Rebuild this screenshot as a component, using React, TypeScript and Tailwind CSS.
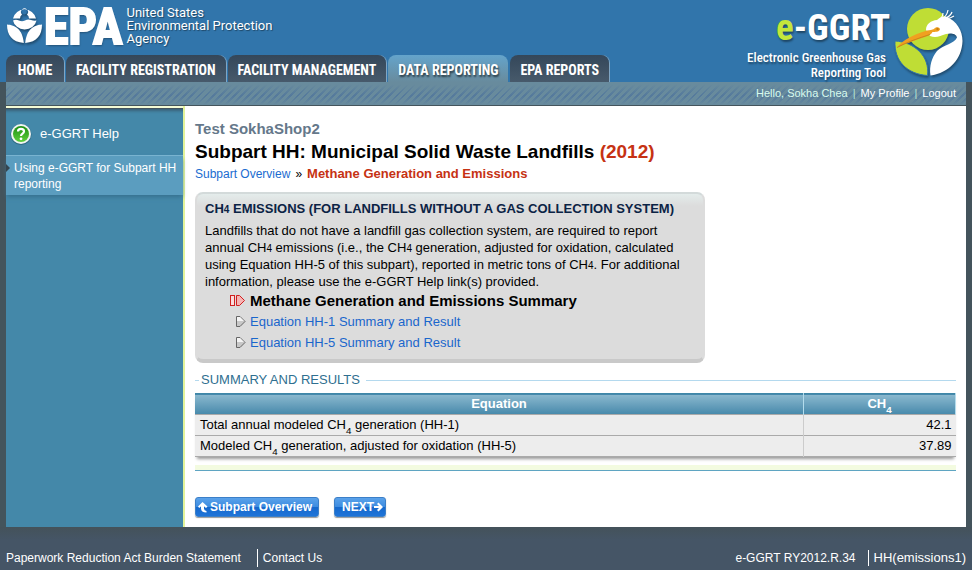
import React from "react";
import clsx from "clsx";

const tabs = [
  { label: "HOME", active: false },
  { label: "FACILITY REGISTRATION", active: false },
  { label: "FACILITY MANAGEMENT", active: false },
  { label: "DATA REPORTING", active: true },
  { label: "EPA REPORTS", active: false },
];

const EpaFlower = () => (
  <svg width="38" height="40" viewBox="0 0 38 40" className="drop-shadow-[1px_2px_1px_rgba(0,0,0,0.35)]">
    <path
      d="M7 12.500 A11.800 11.800 0 0 1 30 12.500 H23 A5 5 0 0 0 21 8.500 A3.500 3.500 0 1 0 16 8.500 A5 5 0 0 0 14 12.500 Z"
      fill="#fff"
    />
    <circle cx="18.500" cy="6" r="2.400" fill="#3175ab" />
    <path d="M7 14.500 Q10 13 13 14.500 T19 14.500 T25 14 T30.500 14.500 A12 11 0 0 1 18.500 23.500 A12 11 0 0 1 7 14.500 Z" fill="#fff" />
    <path d="M1 18.500 C9 19 16.500 23 17.800 37 C6 36 1 29 1 18.500 Z" fill="#fff" />
    <path d="M36 18.500 C28 19 20.500 23 19.200 37 C31 36 36 29 36 18.500 Z" fill="#fff" />
  </svg>
);

const HeronLogo = () => (
  <svg width="72" height="76" viewBox="0 0 72 76" className="drop-shadow-[1px_2px_1px_rgba(0,0,0,0.35)]">
    <circle cx="34" cy="25" r="21" fill="#bfdd35" />
    <path d="M1 37 C20 38 36 52 33.500 71.500 C13 70 0 57 1 37 Z" fill="#bfdd35" stroke="#3175ab" strokeWidth="1" />
    <path
      d="M32 26 C32 20 37 16.500 43 16 C46 13 49 12 52 12.500 C63 17 68.500 27 68.500 37 C68 55 55 69 36.500 71.500 C35 62 38 53 43 47 C49 41 60 40 63 33.500 C62 29 56 29 52 30 C46 32 42 34.500 36 32 Z"
      fill="#fff"
    />
    <path
      d="M48 15 Q53 12 54 6 M50 15 Q57 12 58 8 M52 15 Q57 14 60 12 M47 14 Q49 12 49 9"
      fill="none"
      stroke="#fff"
      strokeWidth="1.200"
    />
    <path d="M3 43.500 C9 36 18 31 33 26.500 C36 26.500 38 25.500 40 25 C41.500 22.500 46 23 46 25.500 C45 28 41 28 38.500 28 C37 30.500 35 31.500 31 33 C22 36 13 39 3 43.500 Z" fill="#f0a020" />
    <path d="M3 43.500 C13 38 25 34 36 30.500" fill="none" stroke="#c07c18" strokeWidth="0.800" />
    <circle cx="43.500" cy="25" r="1.200" fill="#c87a10" />
  </svg>
);

const HelpIcon = () => (
  <svg width="22" height="22" viewBox="0 0 22 22" aria-hidden="true">
    <defs>
      <linearGradient id="help" x1="0" y1="0" x2="0" y2="1">
        <stop offset="0" stopColor="#1d8f12" />
        <stop offset="1" stopColor="#5fd03c" />
      </linearGradient>
    </defs>
    <circle cx="11" cy="11.500" r="10.500" fill="#2d6a84" />
    <circle cx="11" cy="11" r="10" fill="#f2f5f2" />
    <circle cx="11" cy="11" r="8" fill="url(#help)" />
    <path d="M8 8.500 C8 5 14 5 14 8.500 C14 10.800 11 10.500 11 13" fill="none" stroke="#fff" strokeWidth="2.200" />
    <circle cx="11" cy="15.800" r="1.400" fill="#fff" />
  </svg>
);

const StepIcon = ({ current = false }: { current?: boolean }) =>
  current ? (
    <svg width="16" height="13" viewBox="0 0 16 13" aria-hidden="true">
      <rect x="0.500" y="1.500" width="4" height="10" fill="#fbdcdc" stroke="#d02020" />
      <path d="M6.500 1.500 H9.500 L14.500 6.500 L9.500 11.500 H6.500 Z" fill="#f7b4b4" stroke="#d02020" />
    </svg>
  ) : (
    <svg width="10" height="13" viewBox="0 0 10 13" aria-hidden="true">
      <path d="M0.500 1.500 H4 L9 6.500 L4 11.500 H0.500 Z" fill="#c8c8c8" stroke="#666" />
      <path d="M1 2 H4 L8 6 H1 Z" fill="#f4f4f4" />
    </svg>
  );

const Sub4 = () => <span className="text-[10px] leading-none">4</span>;

const Header = () => (
  <header>
    <div className="bg-[#3175ab] h-[82px] px-[6px] flex justify-between">
      <div className="flex flex-col justify-between">
        <div className="flex text-white pt-[6px]">
          <EpaFlower />
          <span className="font-['Roboto_Condensed'] font-bold text-[50px] leading-[42px] [-webkit-text-stroke:2px_white] [text-shadow:1px_2px_2px_rgba(0,0,0,0.3)]">
            EPA
          </span>
          <span className="ml-1 font-[Roboto] text-[13px] leading-[13px] [text-shadow:1px_1px_1px_rgba(0,0,0,0.4)]">
            United States
            <br />
            Environmental Protection
            <br />
            Agency
          </span>
        </div>
        <nav className="flex gap-[2px]">
          {tabs.map((tab) => (
            <a
              key={tab.label}
              href="#"
              className={clsx(
                "h-[27px] min-w-[58px] px-[10px] rounded-t-lg text-center font-['Roboto_Condensed'] font-bold text-[14px] leading-[31px] text-white whitespace-nowrap",
                tab.active
                  ? "bg-linear-to-b from-[#64a4cb] to-[#688b9d] [text-shadow:1px_2px_2px_rgba(0,0,0,0.6)]"
                  : "bg-linear-to-b from-[#34475a] to-[#475a6b] shadow-[1px_0_0_#7fa6c4]"
              )}
            >
              {tab.label}
            </a>
          ))}
        </nav>
      </div>
      <div className="flex text-white">
        <div className="text-right pt-[6px] pr-2 [text-shadow:1px_2px_2px_rgba(0,0,0,0.4)]">
          <div className="-mr-1 font-['Roboto_Condensed'] font-bold text-[37px] leading-[44px]">
            <span className="text-[#c3e63b]">e</span>-GGRT
          </div>
          <div className="font-['Roboto_Condensed'] font-medium text-[13px] leading-[15px]">
            Electronic Greenhouse Gas
            <br />
            Reporting Tool
          </div>
        </div>
        <div className="pt-1">
          <HeronLogo />
        </div>
      </div>
    </div>
    <div className="mx-[6px] h-6 px-[10px] flex items-center justify-end gap-[5px] text-[11px] text-white border-b border-[#44545c] bg-[#688b9d] bg-[linear-gradient(to_bottom,#688b9d_10%,transparent_60%,#688b9d_100%),repeating-linear-gradient(135deg,#54799c_0_2px,#688b9d_2px_5px)]">
      <span className="text-[#d9fbee]">Hello, Sokha Chea</span>
      <span className="text-[#b5e5d5]">|</span>
      <a href="#">My Profile</a>
      <span className="text-[#b5e5d5]">|</span>
      <a href="#">Logout</a>
    </div>
  </header>
);

const Sidebar = () => (
  <aside className="w-[179px] shrink-0 bg-[#4488a9] border-r-2 border-[#e2f39a] text-white">
    <div className="h-[3px] bg-[#f4fbd5] border-b border-[#44545c]" />
    <a href="#" className="h-[46px] pl-1 pt-[3px] flex items-center gap-2 text-[13px] shadow-[inset_0_4px_3px_-2px_#3a6078]">
      <HelpIcon />
      e-GGRT Help
    </a>
    <a
      href="#"
      className="relative block h-10 py-1 pl-2 text-[12px] leading-4 bg-[#5b9dbf] border-t border-[#79b3d0] shadow-[0_3px_4px_-1px_#36718f]"
    >
      <span className="absolute left-0 top-2 border-y-4 border-l-4 border-y-transparent border-l-[#34454f]" />
      Using e-GGRT for Subpart HH reporting
    </a>
  </aside>
);

const InfoBox = () => (
  <section className="mt-[9px] w-[510px] h-[171px] px-2 pt-[6px] rounded-lg border-2 border-t-[#d3dada] border-x-[#dcdcdc] border-b-4 border-b-[#c9c9c9] bg-[#dcdcdc] bg-[linear-gradient(to_bottom,#e4eceb,#dcdcdc_12px)] text-[13px] leading-[17px] text-black">
    <h2 className="font-bold text-[#0b2345] whitespace-nowrap">
      CH
      <Sub4 /> EMISSIONS (FOR LANDFILLS WITHOUT A GAS COLLECTION SYSTEM)
    </h2>
    <p className="pt-[5px] whitespace-nowrap">
      Landfills that do not have a landfill gas collection system, are required to report
      <br />
      annual CH
      <Sub4 /> emissions (i.e., the CH
      <Sub4 /> generation, adjusted for oxidation, calculated
      <br />
      using Equation HH-5 of this subpart), reported in metric tons of CH
      <Sub4 />. For additional
      <br />
      information, please use the e-GGRT Help link(s) provided.
    </p>
    <ul className="pl-[25px]">
      <li className="flex items-center gap-1 h-[21px] text-[15px] font-bold">
        <StepIcon current />
        Methane Generation and Emissions Summary
      </li>
      <li className="flex items-center gap-1 h-[21px] pl-[6px]">
        <StepIcon />
        <a href="#" className="text-[#1a66cc]">Equation HH-1 Summary and Result</a>
      </li>
      <li className="flex items-center gap-1 h-[21px] pl-[6px]">
        <StepIcon />
        <a href="#" className="text-[#1a66cc]">Equation HH-5 Summary and Result</a>
      </li>
    </ul>
  </section>
);

const rows = [
  { before: "Total annual modeled CH", after: " generation (HH-1)", value: "42.1" },
  { before: "Modeled CH", after: " generation, adjusted for oxidation (HH-5)", value: "37.89" },
];

const Results = () => (
  <section className="pt-2 border-b border-[#5fa5c2]">
    <h3 className="flex items-center gap-[6px] h-[18px] text-[13px] text-[#2f6f90] before:w-1 before:h-px before:-mr-1 before:bg-[#b4d9ee] after:flex-1 after:h-px after:bg-[#b4d9ee]">
      SUMMARY AND RESULTS
    </h3>
    <table className="mt-1 w-full border-collapse text-[13px] leading-4 text-black shadow-[0_4px_3px_-2px_#999]">
      <thead>
        <tr className="h-[21px] bg-linear-to-b from-[#8ab8ce] to-[#4488aa] border-t border-[#3f87a8] text-white">
          <th className="border-r border-[#b4dcec]">Equation</th>
          <th className="w-[152px] border-r border-[#b4dcec]">
            CH<sub className="bottom-[-5px]">4</sub>
          </th>
        </tr>
      </thead>
      <tbody>
        {rows.map((row) => (
          <tr key={row.value} className="h-[21px] bg-[#ededed] border-y border-[#aaa]">
            <td className="pl-[5px] border-r border-[#ccc]">
              {row.before}
              <sub className="bottom-[-5px]">4</sub>
              {row.after}
            </td>
            <td className="pr-1 text-right">{row.value}</td>
          </tr>
        ))}
      </tbody>
    </table>
    <div className="mt-2 h-[5px] bg-[#f3fbe0]" />
  </section>
);

const buttonClass =
  "flex items-center h-5 rounded-[3px] border border-[#3b7fc8] bg-[linear-gradient(to_bottom,#5aa2ea,#3c8be0_50%,#1568cc_50%,#1f74d8)] font-bold text-[12px] text-white shadow-[0_1px_1px_#999]";

export default function App() {
  return (
    <div className="min-h-screen bg-[#44545c] font-['Liberation_Sans',sans-serif]">
      <Header />
      <div className="mx-[6px] flex bg-white">
        <Sidebar />
        <main className="flex-1 px-[10px] pt-[14px] pb-[10px]">
          <div className="font-bold text-[15px] leading-[18px] text-[#65788a]">Test SokhaShop2</div>
          <h1 className="font-bold text-[19px] leading-[27px] text-black">
            Subpart HH: Municipal Solid Waste Landfills <span className="text-[#c63213]">(2012)</span>
          </h1>
          <div className="flex gap-[5px] text-[12px] leading-[18px]">
            <a href="#" className="text-[#1a6cd0]">Subpart Overview</a>
            <span className="text-black">»</span>
            <b className="text-[13px] text-[#c63213]">Methane Generation and Emissions</b>
          </div>
          <InfoBox />
          <Results />
          <div className="mt-[26px] flex gap-[15px]">
            <button type="button" className={clsx(buttonClass, "pl-[2px] pr-[6px] gap-[2px]")}>
              <svg width="10" height="11" viewBox="0 0 10 11" aria-hidden="true">
                <path d="M4.500 0 L9.500 4.500 L8 6 L6 4.200 V6.500 Q6 8.500 8.500 9 V10.500 Q3 10.500 3 6.500 V4.200 L1.200 6 L0 4.500 Z" fill="#fff" />
              </svg>
              Subpart Overview
            </button>
            <button type="button" className={clsx(buttonClass, "pl-[7px] pr-[2px]")}>
              NEXT
              <svg width="9" height="10" viewBox="0 0 9 10" aria-hidden="true">
                <path d="M0 4 H5 L3 2 L4.500 0.500 L9 5 L4.500 9.500 L3 8 L5 6 H0 Z" fill="#fff" />
              </svg>
            </button>
          </div>
        </main>
      </div>
      <footer className="h-[43px] px-[6px] pt-[18px] flex items-center justify-between text-[12px] text-white bg-linear-to-b from-[#44525a] to-[#455566] to-30%">
        <div className="flex items-center">
          <a href="#" className="pr-4">Paperwork Reduction Act Burden Statement</a>
          <a href="#" className="pl-[5px] border-l border-white">Contact Us</a>
        </div>
        <div className="flex items-center">
          <span className="pr-3">e-GGRT RY2012.R.34</span>
          <span className="pl-[5px] text-[13px] leading-4 border-l border-white">HH(emissions1)</span>
        </div>
      </footer>
    </div>
  );
}
